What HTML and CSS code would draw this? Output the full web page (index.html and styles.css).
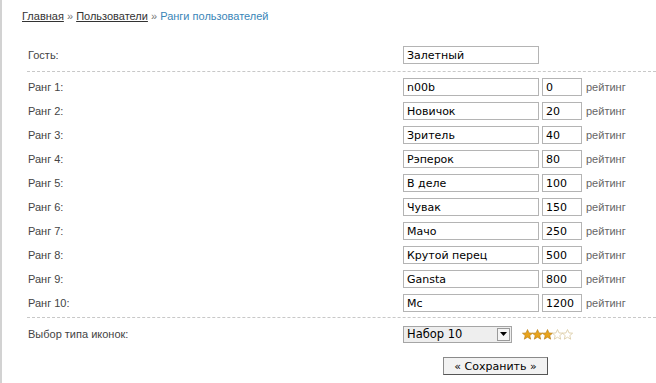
FILE: index.html
```html
<!DOCTYPE html>
<html lang="ru">
<head>
<meta charset="utf-8">
<title>Ранги пользователей</title>
<link rel="stylesheet" href="styles.css">
</head>
<body>
<div class="page">
  <div class="crumbs">
    <a href="#">Главная</a> <span class="sep">»</span> <a href="#">Пользователи</a> <span class="sep">»</span> <span class="current">Ранги пользователей</span>
  </div>
  <form class="form">
    <div class="section guest">
      <div class="row">
        <label class="label">Гость:</label>
        <input class="txt" type="text" value="Залетный">
      </div>
    </div>
    <div class="section ranks">
      <div class="row"><label class="label">Ранг 1:</label><input class="txt" type="text" value="n00b"><input class="num" type="text" value="0"><span class="unit">рейтинг</span></div>
      <div class="row"><label class="label">Ранг 2:</label><input class="txt" type="text" value="Новичок"><input class="num" type="text" value="20"><span class="unit">рейтинг</span></div>
      <div class="row"><label class="label">Ранг 3:</label><input class="txt" type="text" value="Зритель"><input class="num" type="text" value="40"><span class="unit">рейтинг</span></div>
      <div class="row"><label class="label">Ранг 4:</label><input class="txt" type="text" value="Рэперок"><input class="num" type="text" value="80"><span class="unit">рейтинг</span></div>
      <div class="row"><label class="label">Ранг 5:</label><input class="txt" type="text" value="В деле"><input class="num" type="text" value="100"><span class="unit">рейтинг</span></div>
      <div class="row"><label class="label">Ранг 6:</label><input class="txt" type="text" value="Чувак"><input class="num" type="text" value="150"><span class="unit">рейтинг</span></div>
      <div class="row"><label class="label">Ранг 7:</label><input class="txt" type="text" value="Мачо"><input class="num" type="text" value="250"><span class="unit">рейтинг</span></div>
      <div class="row"><label class="label">Ранг 8:</label><input class="txt" type="text" value="Крутой перец"><input class="num" type="text" value="500"><span class="unit">рейтинг</span></div>
      <div class="row"><label class="label">Ранг 9:</label><input class="txt" type="text" value="Gansta"><input class="num" type="text" value="800"><span class="unit">рейтинг</span></div>
      <div class="row"><label class="label">Ранг 10:</label><input class="txt" type="text" value="Mc"><input class="num" type="text" value="1200"><span class="unit">рейтинг</span></div>
    </div>
    <div class="section icons">
      <div class="row">
        <label class="label">Выбор типа иконок:</label>
        <div class="select-wrap">
          <select class="select"><option>Набор 10</option></select>
          <span class="arrow"><svg width="7" height="4" viewBox="0 0 7 4"><path d="M0 0h7L3.5 4z" fill="#000"/></svg></span>
        </div>
        <span class="stars">
          <svg width="52" height="11" viewBox="0 0 52 11">
            <defs>
              <path id="st" d="M5.5 0.5l1.5 3.4 3.6.3-2.8 2.4.9 3.6-3.2-2-3.2 2 .9-3.6L0.4 4.2 4 3.9z"/>
            </defs>
            <use href="#st" x="0" fill="#e8a31c" stroke="#b57a10" stroke-width="0.6"/>
            <use href="#st" x="10" fill="#e8a31c" stroke="#b57a10" stroke-width="0.6"/>
            <use href="#st" x="20" fill="#e8a31c" stroke="#b57a10" stroke-width="0.6"/>
            <use href="#st" x="30" fill="#fff" stroke="#d9c9a0" stroke-width="0.8"/>
            <use href="#st" x="40" fill="#fff" stroke="#d9c9a0" stroke-width="0.8"/>
          </svg>
        </span>
      </div>
    </div>
    <div class="actions">
      <button class="btn" type="button">« Сохранить »</button>
    </div>
  </form>
</div>
</body>
</html>
```

FILE: styles.css
```css
html, body {
  margin: 0;
  padding: 0;
  background: #fff;
}
.page {
  border-left: 2px solid #d2d2d2;
  min-height: 100vh;
  box-sizing: border-box;
  padding: 8px 0 0 20px;
  font-family: "Liberation Sans", Arial, sans-serif;
  font-size: 11px;
  color: #333;
}
.crumbs {
  line-height: 16px;
  font-size: 11px;
  color: #666;
}
.crumbs a {
  color: #333;
  text-decoration: underline;
}
.crumbs .sep {
  color: #777;
}
.crumbs .current {
  color: #3a86b8;
}
.form {
  margin: 19px 0 0 5px;
}
.section {
  border-bottom: 1px dashed #c8c8c8;
}
.guest {
  padding-bottom: 4px;
}
.ranks {
  padding: 3px 0 2px;
}
.icons {
  border-bottom: none;
  padding-top: 4px;
}
.row {
  display: flex;
  align-items: center;
  height: 24px;
}
.label {
  width: 376px;
  flex: none;
  padding-left: 1px;
  box-sizing: border-box;
  color: #444;
}
.txt, .num {
  box-sizing: border-box;
  height: 18px;
  border: 1px solid #b4b4b4;
  padding: 0 3px;
  font-family: "DejaVu Sans", Verdana, sans-serif;
  font-size: 11px;
  color: #000;
  background: #fff;
  margin: 0;
}
.txt {
  width: 136px;
}
.num {
  width: 40px;
  margin-left: 3px;
}
.unit {
  margin-left: 4px;
  color: #666;
}
.select-wrap {
  position: relative;
  width: 109px;
  height: 17px;
}
.select {
  appearance: none;
  -webkit-appearance: none;
  width: 100%;
  height: 100%;
  box-sizing: border-box;
  border: 1px solid #a5a5a5;
  background: #eeeeee;
  font-family: "DejaVu Sans", Verdana, sans-serif;
  font-size: 11.5px;
  color: #000;
  padding: 0 3px;
  margin: 0;
  border-radius: 0;
}
.arrow {
  position: absolute;
  right: 2px;
  top: 2px;
  width: 13px;
  height: 13px;
  box-sizing: border-box;
  border: 1px solid #9a9a9a;
  background: #f4f4f4;
  display: flex;
  align-items: center;
  justify-content: center;
}
.stars {
  margin-left: 10px;
  display: flex;
}
.actions {
  padding: 11px 0 0 416px;
}
.btn {
  width: 105px;
  height: 18px;
  box-sizing: border-box;
  border: 1px solid #8a8a8a;
  border-right-color: #555;
  border-bottom-color: #555;
  background: #f2f2f2;
  font-family: "DejaVu Sans", Verdana, sans-serif;
  font-size: 11px;
  color: #000;
  padding: 0;
  margin: 0;
  border-radius: 0;
}
```
